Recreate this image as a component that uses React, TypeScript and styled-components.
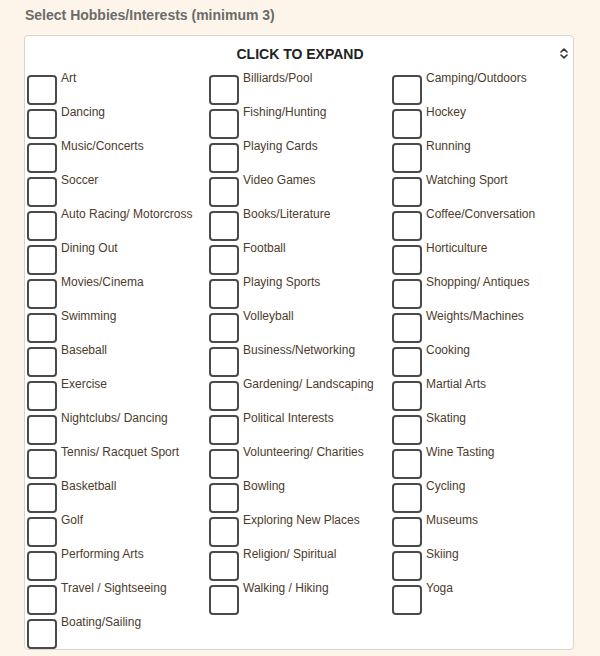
import React from "react";
import styled, { createGlobalStyle } from "styled-components";

const GlobalStyle = createGlobalStyle`
  html, body { margin: 0; padding: 0; background: #fdf5ea; }
  body { font-family: "Liberation Sans", Arial, sans-serif; }
`;

const Page = styled.div`
  width: 600px;
  height: 656px;
  box-sizing: border-box;
  padding: 7px 26px 0 24px;
  overflow: hidden;
`;

const Title = styled.div`
  font-size: 14px;
  font-weight: bold;
  color: #6b6b6b;
  line-height: 17px;
  padding-left: 1px;
  margin-bottom: 11px;
`;

const Panel = styled.div`
  background: #fff;
  border: 1px solid #d9d4cc;
  border-radius: 4px;
  padding: 0 0 0 2px;
  box-sizing: border-box;
  width: 550px;
`;

const Header = styled.div`
  position: relative;
  height: 35px;
  display: flex;
  align-items: center;
  justify-content: center;
  font-size: 14px;
  font-weight: bold;
  color: #222;
`;

const Chevron = styled.svg`
  position: absolute;
  right: 5px;
  top: 12px;
`;

const Grid = styled.div`
  display: grid;
  grid-template-columns: 182px 183px 182px;
`;

const Item = styled.label`
  display: flex;
  align-items: flex-start;
  height: 34px;
  cursor: pointer;
`;

const Box = styled.span`
  flex: none;
  width: 26px;
  height: 26px;
  border: 2px solid #4a4a4a;
  border-radius: 4px;
  margin-top: 4px;
`;

const Label = styled.span`
  font-size: 12px;
  line-height: 14px;
  color: #4d3b2c;
  margin-left: 4px;
  white-space: nowrap;
`;

const items = [
  "Art", "Billiards/Pool", "Camping/Outdoors",
  "Dancing", "Fishing/Hunting", "Hockey",
  "Music/Concerts", "Playing Cards", "Running",
  "Soccer", "Video Games", "Watching Sport",
  "Auto Racing/ Motorcross", "Books/Literature", "Coffee/Conversation",
  "Dining Out", "Football", "Horticulture",
  "Movies/Cinema", "Playing Sports", "Shopping/ Antiques",
  "Swimming", "Volleyball", "Weights/Machines",
  "Baseball", "Business/Networking", "Cooking",
  "Exercise", "Gardening/ Landscaping", "Martial Arts",
  "Nightclubs/ Dancing", "Political Interests", "Skating",
  "Tennis/ Racquet Sport", "Volunteering/ Charities", "Wine Tasting",
  "Basketball", "Bowling", "Cycling",
  "Golf", "Exploring New Places", "Museums",
  "Performing Arts", "Religion/ Spiritual", "Skiing",
  "Travel / Sightseeing", "Walking / Hiking", "Yoga",
  "Boating/Sailing",
];

export default function App() {
  return (
    <>
      <GlobalStyle />
      <Page>
        <Title>Select Hobbies/Interests (minimum 3)</Title>
        <Panel>
          <Header>
            CLICK TO EXPAND
            <Chevron width="8" height="11" viewBox="0 0 8 11">
              <path d="M1 4 L4 1.2 L7 4 M1 7 L4 9.8 L7 7" fill="none" stroke="#333" strokeWidth="1.6" strokeLinecap="round" strokeLinejoin="round" />
            </Chevron>
          </Header>
          <Grid>
            {items.map((it) => (
              <Item key={it}>
                <Box />
                <Label>{it}</Label>
              </Item>
            ))}
          </Grid>
        </Panel>
      </Page>
    </>
  );
}
